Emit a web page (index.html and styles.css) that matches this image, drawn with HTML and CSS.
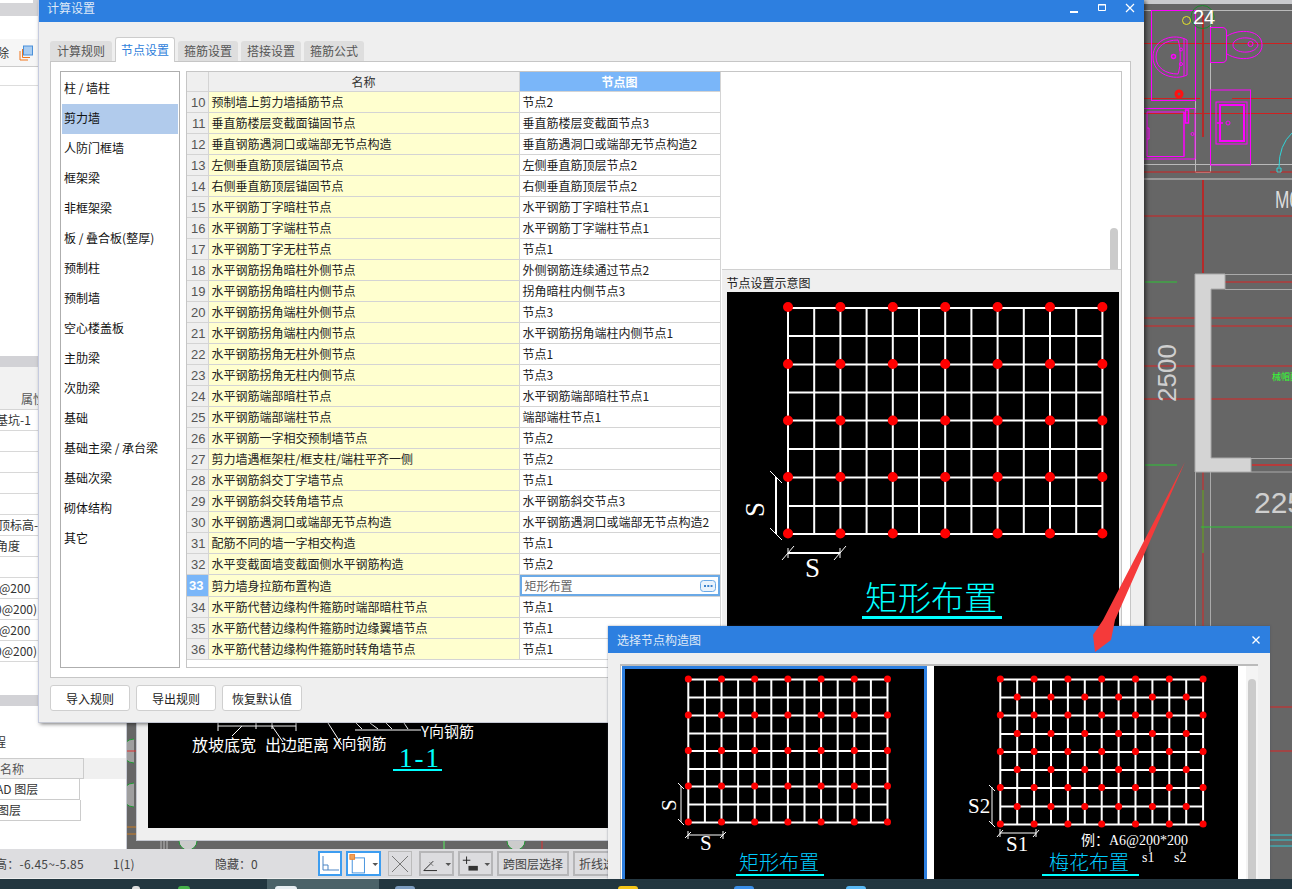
FILE: index.html
```html
<!DOCTYPE html>
<html lang="zh">
<head>
<meta charset="utf-8">
<title>计算设置</title>
<link rel="stylesheet" href="styles.css">
</head>
<body>
<div class="desktop">

  <aside class="side">
    <div class="side-top"><span class="side-tab"></span></div>
    <div class="side-light"></div>
    <div class="side-tools"><span class="tool-text">除</span>
      <svg class="tool-icon" width="16" height="16" viewBox="0 0 16 16"><path d="M2 6V15H10M4.500 4V12.500H12" fill="none" stroke="#f0761e"/><rect x="5.500" y="1" width="9" height="9" fill="#a9cdf2" stroke="#4a90d9"/></svg>
    </div>
    <div class="side-line"></div>
    <div class="side-tree"></div>
    <div class="side-bar"></div>
    <div class="prop-head"><span>属性</span></div>
    <div class="prop-row"><span class="in3">基坑-1</span></div>
    <div class="prop-row"></div>
    <div class="prop-row"></div>
    <div class="prop-row"></div>
    <div class="prop-row"></div>
    <div class="prop-row"><span class="in2">顶标高-</span></div>
    <div class="prop-row"><span class="in3">角度</span></div>
    <div class="prop-row"></div>
    <div class="prop-row"><span class="in1">@200</span></div>
    <div class="prop-row"><span class="in4">0@200)</span></div>
    <div class="prop-row"><span class="in1">@200</span></div>
    <div class="prop-row"><span class="in4">0@200)</span></div>
    <div class="side-gap"></div>
    <div class="side-bar"></div>
    <div class="layer-title"><span class="in6">程</span></div>
    <div class="layer-head"><span class="layer-cell">名称</span></div>
    <div class="layer-row"><span class="layer-cell in5">AD 图层</span></div>
    <div class="layer-row"><span class="layer-cell in7">图层</span></div>
  </aside>

  <svg class="cad-strip" width="10" height="126" viewBox="0 0 10 126">
    <rect width="10" height="126" fill="#666"/>
    <path d="M7 16A12 12 0 0 0 7 40M7 60A12 12 0 0 0 7 84" fill="#d8d8d8" fill-opacity=".5" stroke="#1f9a32"/>
    <path d="M0 28H10" stroke="#d33"/>
    <path d="M0 104H10M0 111H10" stroke="#c77a24"/>
  </svg>

  <svg class="cad" width="148" height="889" viewBox="1144 0 148 889">
    <rect x="1144" y="0" width="148" height="889" fill="#666"/>
    <rect x="1144" y="0" width="148" height="4" fill="#c9cacd"/>
    <g fill="none" stroke="#b9b9b9">
      <path d="M1144 10.500H1292M1144 164.500H1292M1195.500 10V172M1210.500 10V172M1195.500 172.500H1210.500"/>
      <path d="M1144 179H1292" stroke="#999" stroke-width="2"/>
    </g>
    <g fill="none" stroke="#d92424">
      <path d="M1144 43.500H1292M1144 98.500H1200M1232 98.500H1292M1144 113.500H1292M1144 172H1240M1270 172H1292M1144 216H1292" stroke="#d02020"/>
      <path d="M1203 15V137M1203 180V273" stroke="#b52a2a" stroke-width="2"/>
      <path d="M1225 282H1292M1144 318H1195M1211 318H1292M1144 326H1195M1211 326H1292M1144 366H1292M1144 399H1292M1252 465H1292M1203 472V889M1144 707H1292M1144 751H1292"/>
    </g>
    <g fill="none" stroke="#f0f">
      <rect x="1151.500" y="10.500" width="44" height="90"/>
      <path d="M1187 40C1175 33 1153 38 1153 57C1153 75 1175 81 1187 75ZM1178 40C1166 40 1156 46 1156 57C1156 68 1166 74 1178 74C1181 66 1181 48 1178 40ZM1184 38V76"/>
      <circle cx="1173.500" cy="56.500" r="2" stroke-width="1.500"/><circle cx="1181" cy="49.500" r="1.500"/><circle cx="1181" cy="64" r="1.500"/>
      <path d="M1210.500 27.500H1222Q1226.500 27.500 1226.500 32V58Q1226.500 62.500 1222 62.500H1210.500Z"/>
      <path d="M1227 36C1240 28 1262 30 1262 45C1262 60 1240 62 1227 54M1233 45C1233 36 1256 35 1258 45C1256 55 1233 54 1233 45Z"/>
      <circle cx="1250.500" cy="44" r="2.500"/>
      <rect x="1210.500" y="90" width="40" height="75"/>
      <rect x="1216" y="102" width="31" height="42"/>
      <rect x="1220" y="105" width="24" height="36" stroke-width="2"/>
      <circle cx="1228" cy="123" r="2"/><path d="M1217 123H1223M1220 121V125" stroke-width="1.500"/>
      <path d="M1144 108.500H1195V159H1144M1147 112H1184V156.500H1147V112M1184 112V157M1147 128H1149V139H1147"/>
      <rect x="1185.500" y="110" width="3" height="13" stroke-width="1.500"/>
      <circle cx="1192.500" cy="134" r="1.500"/>
    </g>
    <circle cx="1202.500" cy="17" r="11.500" fill="none" stroke="#198a2a"/>
    <circle cx="1186.500" cy="20.500" r="4" fill="none" stroke="#e5e52a"/>
    <circle cx="1179" cy="94" r="3" fill="none" stroke="#f11" stroke-width="3"/>
    <path d="M1292 133Q1279 145 1279 167M1277 168H1281V172H1277Z" fill="none" stroke="#2fd6da"/>
    <text class="cad-num" x="1193" y="24">24</text>
    <text class="cad-m" transform="translate(1275 208) scale(.72 1)">M0</text>
    <path d="M1195 274H1225V289H1211V458H1251V472H1195Z" fill="#d4d4d4" stroke="#aaa"/>
    <path d="M1225 274.500H1292M1225 289.500H1292M1251 458.500H1292M1251 472H1292M1195.500 472V889M1210.500 472V889" fill="none" stroke="#aaa"/>
    <path d="M1145 282H1177M1145 465H1177M1201 527H1292M1203 490V553" stroke="#2dc635" fill="none"/>
    <path d="M1252 465H1292" stroke="#c33"/>
    <text class="cad-dim" transform="translate(1176 402) rotate(-90)">2500</text>
    <text class="cad-dim225" x="1254" y="513">225</text>
    <text class="cad-green" x="1272" y="380">械帽配</text>
    <path d="M1270 835H1292M1270 840H1292M1270 846H1292" stroke="#31c9d3"/>
  </svg>

  <section class="subwin">
    <svg class="sub-draw" width="460" height="105" viewBox="148 723 460 105">
      <rect x="148" y="723" width="460" height="105" fill="#000"/>
      <path d="M218 723V731M218 726H296M256 723V729M272 723V729M296 723V731M232 736L242 726M283 742L272 726M328 723L342 745M356 723L362 729M370 723L378 729M386 723L392 729M404 723L408 729M355 730H421" fill="none" stroke="#fff"/>
      <text class="cad-white" x="192" y="751">放坡底宽</text>
      <text class="cad-white" x="265" y="751">出边距离</text>
      <text class="cad-white x-label" x="333" y="749">X向钢筋</text>
      <text class="cad-white x-label" x="421" y="737">Y向钢筋</text>
      <text class="sub-cyan" x="399" y="767">1-1</text>
      <rect x="393" y="769" width="49" height="2" fill="#0ff"/>
    </svg>
  </section>

  <svg class="cad-below" width="500" height="8" viewBox="136 841 500 8">
    <path d="M161 841V849M164 841V849M167 841V849M444 841V849" stroke="#bbb"/>
    <path d="M444 841V849" stroke="#2dc635"/>
    <path d="M542 841V849" stroke="#d33"/>
    <path d="M179 841A9 9 0 0 0 197 841M507 841A9 9 0 0 0 525 841" fill="#ccc" stroke="#1f9a32"/>
  </svg>

  <footer class="status">
    <span class="st-a">高：-6.45~-5.85</span>
    <span class="st-b">1(1)</span>
    <span class="st-c">隐藏：0</span>
    <button class="st-btn on w24"><svg width="20" height="20" viewBox="0 0 20 20"><path d="M3 2V16H19M3 11H8V16" fill="none" stroke="#4a84c4"/></svg></button>
    <button class="st-btn on w35"><svg width="33" height="22" viewBox="0 0 33 22"><rect x="4.500" y="4.500" width="13" height="16" fill="none" stroke="#3f8fdc"/><rect x="2" y="1" width="5" height="5" fill="#f0a25a" stroke="#e8802c"/><path d="M26 10H32L29 13Z" fill="#555"/></svg></button>
    <button class="st-btn w24 off"><svg width="20" height="20" viewBox="0 0 20 20"><path d="M2 2L18 18M18 2L2 18" stroke="#777"/></svg></button>
    <button class="st-btn w35"><svg width="33" height="22" viewBox="0 0 33 22"><path d="M3 18H17M3 18L13 8" stroke="#222" fill="none"/><path d="M9 9L13 13" stroke="#777"/><path d="M26 10H32L29 13Z" fill="#555"/></svg></button>
    <button class="st-btn w35"><svg width="33" height="22" viewBox="0 0 33 22"><path d="M3 7H11M7 3V11" stroke="#222"/><rect x="9" y="13" width="10" height="5" fill="#333"/><path d="M26 10H32L29 13Z" fill="#555"/></svg></button>
    <button class="st-btn w72">跨图层选择</button>
    <button class="st-btn w60">折线选择</button>
  </footer>

  <div class="taskbar">
    <span class="task-dot t1"></span>
    <span class="task-dot t2"></span>
    <span class="task-active"><span class="task-dot t3"></span></span>
    <span class="task-dot t4"></span>
    <span class="task-dot t5"></span>
    <span class="task-dot t6"></span>
    <span class="task-dot t7"></span>
  </div>

  <section class="win main-win">
    <header class="win-title">
      <span class="win-name">计算设置</span>
      <span class="win-btns">
        <svg width="10" height="10" viewBox="0 0 10 10"><rect x="1" y="8" width="8" height="2" fill="#fff"/></svg>
        <svg width="10" height="10" viewBox="0 0 10 10"><path d="M1.500 1.500H8.500V7.500H1.500Z M1 2H9" fill="none" stroke="#fff"/></svg>
        <svg width="10" height="10" viewBox="0 0 10 10"><path d="M1 1L9 9M9 1L1 9" stroke="#fff" stroke-width="1.200"/></svg>
      </span>
    </header>
    <nav class="tabs">
      <span class="tab">计算规则</span>
      <span class="tab active">节点设置</span>
      <span class="tab">箍筋设置</span>
      <span class="tab">搭接设置</span>
      <span class="tab">箍筋公式</span>
    </nav>
    <div class="pane">
      <ul class="list">
        <li>柱 / 墙柱</li>
        <li class="sel">剪力墙</li>
        <li>人防门框墙</li>
        <li>框架梁</li>
        <li>非框架梁</li>
        <li>板 / 叠合板(整厚)</li>
        <li>预制柱</li>
        <li>预制墙</li>
        <li>空心楼盖板</li>
        <li>主肋梁</li>
        <li>次肋梁</li>
        <li>基础</li>
        <li>基础主梁 / 承台梁</li>
        <li>基础次梁</li>
        <li>砌体结构</li>
        <li>其它</li>
      </ul>
      <div class="grid-box">
        <table class="grid">
          <colgroup><col class="c-num"><col class="c-name"><col class="c-node"></colgroup>
          <thead><tr><th></th><th>名称</th><th class="th-on">节点图</th></tr></thead>
          <tbody>
            <tr><td>10</td><td>预制墙上剪力墙插筋节点</td><td>节点2</td></tr>
            <tr><td>11</td><td>垂直筋楼层变截面锚固节点</td><td>垂直筋楼层变截面节点3</td></tr>
            <tr><td>12</td><td>垂直钢筋遇洞口或端部无节点构造</td><td>垂直筋遇洞口或端部无节点构造2</td></tr>
            <tr><td>13</td><td>左侧垂直筋顶层锚固节点</td><td>左侧垂直筋顶层节点2</td></tr>
            <tr><td>14</td><td>右侧垂直筋顶层锚固节点</td><td>右侧垂直筋顶层节点2</td></tr>
            <tr><td>15</td><td>水平钢筋丁字暗柱节点</td><td>水平钢筋丁字暗柱节点1</td></tr>
            <tr><td>16</td><td>水平钢筋丁字端柱节点</td><td>水平钢筋丁字端柱节点1</td></tr>
            <tr><td>17</td><td>水平钢筋丁字无柱节点</td><td>节点1</td></tr>
            <tr><td>18</td><td>水平钢筋拐角暗柱外侧节点</td><td>外侧钢筋连续通过节点2</td></tr>
            <tr><td>19</td><td>水平钢筋拐角暗柱内侧节点</td><td>拐角暗柱内侧节点3</td></tr>
            <tr><td>20</td><td>水平钢筋拐角端柱外侧节点</td><td>节点3</td></tr>
            <tr><td>21</td><td>水平钢筋拐角端柱内侧节点</td><td>水平钢筋拐角端柱内侧节点1</td></tr>
            <tr><td>22</td><td>水平钢筋拐角无柱外侧节点</td><td>节点1</td></tr>
            <tr><td>23</td><td>水平钢筋拐角无柱内侧节点</td><td>节点3</td></tr>
            <tr><td>24</td><td>水平钢筋端部暗柱节点</td><td>水平钢筋端部暗柱节点1</td></tr>
            <tr><td>25</td><td>水平钢筋端部端柱节点</td><td>端部端柱节点1</td></tr>
            <tr><td>26</td><td>水平钢筋一字相交预制墙节点</td><td>节点2</td></tr>
            <tr><td>27</td><td>剪力墙遇框架柱/框支柱/端柱平齐一侧</td><td>节点2</td></tr>
            <tr><td>28</td><td>水平钢筋斜交丁字墙节点</td><td>节点1</td></tr>
            <tr><td>29</td><td>水平钢筋斜交转角墙节点</td><td>水平钢筋斜交节点3</td></tr>
            <tr><td>30</td><td>水平钢筋遇洞口或端部无节点构造</td><td>水平钢筋遇洞口或端部无节点构造2</td></tr>
            <tr><td>31</td><td>配筋不同的墙一字相交构造</td><td>节点1</td></tr>
            <tr><td>32</td><td>水平变截面墙变截面侧水平钢筋构造</td><td>节点2</td></tr>
            <tr class="cur"><td>33</td><td>剪力墙身拉筋布置构造</td><td><span class="edit"><span>矩形布置</span><svg class="dots" width="16" height="12" viewBox="0 0 16 12"><rect x=".5" y=".5" width="15" height="11" rx="3" fill="#eaf3fc" stroke="#6aa9e6"/><path d="M4 6H12.500" stroke="#3b82cc" stroke-width="2" stroke-dasharray="2 1.300"/></svg></span></td></tr>
            <tr><td>34</td><td>水平筋代替边缘构件箍筋时端部暗柱节点</td><td>节点1</td></tr>
            <tr><td>35</td><td>水平筋代替边缘构件箍筋时边缘翼墙节点</td><td>节点1</td></tr>
            <tr><td>36</td><td>水平筋代替边缘构件箍筋时转角墙节点</td><td>节点1</td></tr>
          </tbody>
        </table>
        <div class="right-col">
          <div class="blank"><span class="scroll"></span></div>
          <div class="preview">
            <div class="preview-name">节点设置示意图</div>
            <svg class="preview-img" width="392" height="340" viewBox="726 292 392 340">
              <rect x="726" y="292" width="392" height="340" fill="#000"/>
              <path class="wire" d="M787 308V534M813.200 308V534M839.400 308V534M865.600 308V534M891.800 308V534M918 308V534M944.200 308V534M970.400 308V534M996.600 308V534M1022.800 308V534M1049 308V534M1075.200 308V534M1101.400 308V534M787 308H1101.400M787 336H1101.400M787 364.500H1101.400M787 392.500H1101.400M787 420.500H1101.400M787 449H1101.400M787 477.500H1101.400M787 506H1101.400M787 534H1101.400"/>
              <path class="dot-big" d="M787 307H1102M787 364H1102M787 420.500H1102M787 477H1102M787 533.500H1102"/>
              <path d="M775 477V534M769 471L781 483M769 528L781 540M787 553H839M787 548V558M839 548V558M781 560L793 546M833 560L845 546" fill="none" stroke="#fff"/>
              <path d="M775 477V534M787 553H839" stroke="#fff" stroke-width="2" fill="none"/>
              <text class="big-s" transform="translate(763 517) rotate(-90)">S</text>
              <text class="big-s" x="804" y="577">S</text>
              <text class="big-title" x="864" y="610">矩形布置</text>
              <rect x="861" y="616" width="140" height="3" fill="#0ff"/>
            </svg>
          </div>
        </div>
      </div>
    </div>
    <div class="actions">
      <button class="act">导入规则</button>
      <button class="act">导出规则</button>
      <button class="act">恢复默认值</button>
    </div>
  </section>

  <section class="win pick-win">
    <header class="pick-title">
      <span>选择节点构造图</span>
      <svg width="10" height="10" viewBox="0 0 10 10"><path d="M1.500 1.500L8.500 8.500M8.500 1.500L1.500 8.500" stroke="#fff" stroke-width="1.300"/></svg>
    </header>
    <div class="pick-body">
      <div class="pick-frame">
        <div class="pick-item chosen">
          <svg width="299" height="210" viewBox="625 669 299 210">
            <rect x="625" y="669" width="299" height="210" fill="#000"/>
            <path class="wire" d="M688.300 679V822.500M704.900 679V822.500M721.500 679V822.500M738.100 679V822.500M754.700 679V822.500M771.300 679V822.500M787.900 679V822.500M804.500 679V822.500M821.100 679V822.500M837.700 679V822.500M854.300 679V822.500M870.900 679V822.500M887.500 679V822.500M688 679.500H888M688 697.500H888M688 715.500H888M688 733.500H888M688 751H888M688 769H888M688 786.500H888M688 804.500H888M688 822.500H888"/>
            <path class="dot-a" d="M688.300 679H888M688.300 715H888M688.300 750.500H888M688.300 786H888M688.300 822H888"/>
            <path d="M681 786V822M678 783L684 789M678 819L684 825M688 835H723M688 831V839M723 831V839M685 838L691 832M720 838L726 832" fill="none" stroke="#fff"/>
            <text class="mid-s" transform="translate(676 811) rotate(-90)">S</text>
            <text class="mid-s" x="700" y="850">S</text>
            <text class="mid-title" x="739" y="870">矩形布置</text>
            <rect x="736" y="874" width="88" height="2" fill="#0ff"/>
          </svg>
        </div>
        <div class="pick-item">
          <svg width="304" height="213" viewBox="934 666 304 213">
            <rect x="934" y="666" width="304" height="213" fill="#000"/>
            <path class="wire" d="M1000.300 679V825M1017.200 679V825M1034.100 679V825M1051 679V825M1067.900 679V825M1084.800 679V825M1101.700 679V825M1118.600 679V825M1135.500 679V825M1152.400 679V825M1169.300 679V825M1186.200 679V825M1203.100 679V825M1000 679.500H1203M1000 697.500H1203M1000 715.500H1203M1000 734H1203M1000 752H1203M1000 770H1203M1000 788H1203M1000 806.500H1203M1000 824.500H1203"/>
            <path class="dot-a dot-b" d="M1000.300 679H1204M1000.300 715H1204M1000.300 751.500H1204M1000.300 787.500H1204M1000.300 824H1204"/>
            <path class="dot-a dot-b" d="M1017.200 697H1204M1017.200 733.500H1204M1017.200 769.500H1204M1017.200 806.500H1204"/>
            <path d="M992 787V824M989 785L995 791M989 821L995 827M1000 833H1036M1000 829V837M1036 829V837M997 837L1003 830M1033 837L1039 830M1150 846V852M1182 846V852" fill="none" stroke="#fff"/>
            <text class="mid-s" x="968" y="813">S2</text>
            <text class="mid-s" x="1006" y="851">S1</text>
            <text class="eg" x="1081" y="845">例：A6@200*200</text>
            <text class="eg" x="1142" y="862">s1</text>
            <text class="eg" x="1174" y="862">s2</text>
            <text class="mid-title" x="1049" y="870">梅花布置</text>
            <rect x="1042" y="874" width="97" height="2" fill="#0ff"/>
          </svg>
        </div>
        <div class="pick-scroll"><span></span></div>
      </div>
    </div>
  </section>

  <svg class="arrow" width="100" height="195" viewBox="0 0 100 195"><path d="M95 0L25 158L21 178L5 190L3 173L13 158Z" fill="#f53a3a"/></svg>
</div>
</body>
</html>
```
FILE: styles.css
```css
* { box-sizing: border-box; }
html, body { margin: 0; padding: 0; }
body { font-family: "Noto Sans CJK SC", "Liberation Sans", sans-serif; font-size: 12px; color: #222; }
.desktop { position: relative; width: 1292px; height: 889px; overflow: hidden; background: #666; }

/* left background panel */
.side { position: absolute; left: 0; top: 0; width: 127px; height: 849px; background: #fff; border-right: 1px solid #c9ccd6; display: flex; flex-direction: column; }
.side-top { height: 16px; background: #d5d5d8; }
.side-tab { display: block; width: 33px; height: 3px; background: #fff; }
.side-light { height: 23px; background: #fff; }
.side-tools { height: 28px; background: #f6f6f6; border-bottom: 1px solid #ccc; display: flex; align-items: center; gap: 9px; }
.tool-text { margin-left: -3px; color: #333; }
.side-line { height: 19px; background: #fff; border-bottom: 1px solid #ddd; }
.side-tree { height: 270px; background: #fff; }
.side-bar { height: 11px; background: #d2d2d6; flex: none; }
.prop-head { height: 43px; padding-top: 21px; padding-left: 21px; line-height: 22px; background: #f2f2f2; border-bottom: 1px solid #d5d5d5; color: #555; flex: none; }
.prop-row { height: 21px; border-bottom: 1px solid #d8d8d8; line-height: 20px; white-space: nowrap; color: #333; flex: none; }
.in1 { margin-left: -1px; }
.in2 { margin-left: -2px; }
.in3 { margin-left: -4px; }
.in4 { margin-left: -5px; }
.in5 { margin-left: -4px; }
.in6 { margin-left: -6px; }
.in7 { margin-left: -3px; }
.side-gap { height: 33px; flex: none; }
.layer-title { height: 52px; padding-top: 27px; color: #333; flex: none; }
.layer-head { height: 21px; background: #f0f0f0; line-height: 20px; color: #555; flex: none; }
.layer-row { height: 21px; line-height: 20px; color: #333; flex: none; }
.layer-cell { display: block; width: 84px; height: 21px; border-right: 1px solid #ccc; border-bottom: 1px solid #ccc; }
.layer-head .layer-cell { border-top: 1px solid #ccc; }

/* fragments of the CAD canvas */
.cad-strip { position: absolute; left: 127px; top: 723px; }
.cad-below { position: absolute; left: 136px; top: 841px; }
.cad { position: absolute; left: 1144px; top: 0; }
.cad-num { font: 20px "Liberation Sans", sans-serif; fill: #fff; }
.cad-m { font: 24px "Liberation Sans", sans-serif; fill: #ddd; }
.cad-dim { font: 26px "Liberation Sans", sans-serif; fill: #cfcfcf; }
.cad-dim225 { font: 30px "Liberation Sans", sans-serif; fill: #cfcfcf; }
.cad-green { font: 9px "Noto Sans CJK SC", sans-serif; fill: #3f3; }

.subwin { position: absolute; left: 136px; top: 700px; width: 500px; height: 141px; background: #efefef; border: 1px solid #c3c6ce; border-top: 0; padding: 23px 0 0 11px; }
.sub-draw { display: block; }
.cad-white { font: 16px "Noto Sans CJK SC", sans-serif; fill: #fff; }
.x-label { font-size: 15px; }
.sub-cyan { font: 27px "Liberation Serif", serif; fill: #0ff; letter-spacing: 2px; }

/* status bar */
.status { position: absolute; left: 0; top: 849px; width: 700px; height: 30px; background: #dddde0; border-bottom: 1px solid #eee; display: flex; align-items: center; white-space: nowrap; color: #444; font-size: 12px; }
.st-a { width: 113px; flex: none; text-indent: -5px; letter-spacing: .25px; }
.st-b { width: 102px; flex: none; }
.st-c { width: 103px; flex: none; }
.st-btn { height: 25px; padding: 0; margin: 0 4px 0 0; background: #dcdcdf; border: 2px solid #b6b6b8; font: 12px "Noto Sans CJK SC", sans-serif; color: #444; display: flex; align-items: center; justify-content: center; flex: none; }
.st-btn svg { display: block; }
.st-btn.on { border-color: #3d9df0; background: #fff; }
.w24 { width: 24px; }
.w35 { width: 35px; }
.w72 { width: 72px; }
.w60 { width: 60px; }
.off { margin-left: 3px; margin-right: 7px; border-color: #bbb; border-width: 1px; }

/* taskbar */
.taskbar { position: absolute; left: 0; top: 879px; width: 1292px; height: 10px; background: #22363f; display: flex; align-items: flex-end; }
.task-active { width: 112px; height: 10px; background: #4b6268; margin-left: 77px; display: flex; align-items: flex-end; flex: none; }
.task-dot { display: block; flex: none; height: 3px; width: 8px; border-radius: 4px 4px 0 0; background: #ddd; }
.t1 { margin-left: 132px; }
.t2 { margin-left: 38px; background: #46b04a; width: 12px; }
.t3 { margin-left: 8px; width: 22px; background: #e8eef2; }
.t4 { margin-left: 16px; width: 20px; background: #7c9cc0; }
.t5 { margin-left: 203px; width: 20px; background: #f5c518; }
.t6 { margin-left: 96px; width: 20px; background: #3a8ee8; }
.t7 { margin-left: 92px; width: 20px; background: #59b9f5; }

/* windows */
.win { position: absolute; }
.main-win { left: 38px; top: 0; width: 1106px; height: 723px; background: #efefef; border-left: 1px solid #c5cbe0; border-bottom: 1px solid #c5c8d2; box-shadow: 2px 1px 4px rgba(0,0,0,.55); display: flex; flex-direction: column; }
.win-title { height: 22px; background: #2d7fe0; color: #dfe9f7; display: flex; justify-content: space-between; padding: 0 9px 0 8px; flex: none; }
.win-name { line-height: 16px; }
.win-btns { display: flex; gap: 18px; padding-top: 3px; }
.tabs { display: flex; gap: 3px; height: 25px; margin: 15px 0 0 11px; align-items: flex-end; position: relative; z-index: 1; flex: none; }
.tab { width: 60px; height: 20px; margin-bottom: 1px; background: #dedede; border-radius: 3px 3px 0 0; text-align: center; line-height: 20px; color: #555; }
.tab:first-child { width: 62px; }
.tab.active { height: 25px; margin-bottom: 0; background: #fff; color: #2f7fdb; border: 1px solid #ccc; border-bottom: 0; line-height: 24px; }
.pane { margin: -1px 12px 0 11px; width: 1081px; height: 617px; background: #fff; border: 1px solid #c6c6c6; padding: 9px; display: flex; gap: 6px; flex: none; }
.list { margin: 0; padding: 2px 1px; list-style: none; width: 120px; height: 597px; border: 1px solid #aeaeae; background: #fff; flex: none; }
.list li { height: 30px; line-height: 28px; padding-left: 2px; color: #111; }
.list li.sel { background: #b1cbec; }
.grid-box { width: 936px; height: 597px; display: flex; border: 1px solid #c6c6c6; background: #fff; }
.grid { border-collapse: collapse; table-layout: fixed; width: 533px; flex: none; align-self: flex-start; }
.c-num { width: 21px; }
.c-name { width: 311px; }
.c-node { width: 201px; }
.grid th { height: 19px; background: #efefef; border: 1px solid #d4d4d4; border-top: 0; border-left: 0; font-weight: 400; color: #333; padding: 0; line-height: 19px; }
.grid th.th-on { background: #7ab6f9; color: #fff; font-weight: 700; }
.grid td { height: 21px; border: 1px solid #d4d4d4; padding: 0 3px; line-height: 20px; white-space: nowrap; overflow: hidden; color: #222; }
.grid td:first-child { background: #efefef; color: #555; text-align: right; padding: 0 2px 0 0; border-left: 0; font: 13px "Liberation Sans", sans-serif; }
.grid td:nth-child(2) { background: #ffffcf; }
.grid tr.cur td:first-child { background: #7ab6f9; color: #fff; font-weight: 700; text-align: center; }
.grid tr.cur td:last-child { padding: 0; }
.edit { display: flex; align-items: center; justify-content: space-between; height: 21px; border: 2px solid #6aa9e6; padding: 0 2px 0 3px; color: #666; }
.dots { display: block; flex: none; }
.right-col { flex: 1; min-width: 0; display: flex; flex-direction: column; }
.blank { height: 197px; display: flex; justify-content: flex-end; align-items: flex-end; flex: none; }
.scroll { width: 8px; height: 41px; margin-right: 3px; background: #cbcbcb; border-radius: 4px 4px 0 0; }
.preview { flex: 1; min-height: 0; background: #efefef; border-top: 1px solid #d0d0d0; padding: 0 3px 0 5px; overflow: hidden; margin-left: 1px; }
.preview-name { height: 22px; line-height: 25px; color: #222; }
.preview-img { display: block; }
.wire { fill: none; stroke: #fff; stroke-width: 2; }
.dot-big { fill: none; stroke: #f00; stroke-width: 10; stroke-linecap: round; stroke-dasharray: 0 52.4; }
.big-s { font: 27px "Liberation Serif", serif; fill: #fff; }
.big-title { font: 300 33px "Noto Sans CJK SC", sans-serif; fill: #0ff; }
.actions { display: flex; gap: 6px; padding: 7px 0 0 11px; }
.act { height: 26px; width: 80px; padding: 0; background: #fff; border: 1px solid #cfcfcf; border-radius: 3px; font: 12px "Noto Sans CJK SC", sans-serif; color: #222; }

.pick-win { left: 608px; top: 626px; width: 662px; height: 253px; background: #efefef; box-shadow: 0 0 2px rgba(60,70,90,.5); overflow: hidden; }
.pick-title { height: 27px; background: #2d7fe0; color: #dfe9f7; display: flex; justify-content: space-between; align-items: center; padding: 0 9px; }
.pick-body { padding: 11px 12px 0 12px; }
.pick-frame { height: 240px; background: #fff; border-top: 2px solid #bbb; border-left: 1px solid #bbb; display: flex; align-items: flex-start; gap: 7px; }
.pick-item { flex: none; background: #000; }
.pick-item svg { display: block; }
.pick-item.chosen { border: 3px solid #2d7fe0; border-bottom: 0; margin-left: 1px; }
.pick-scroll { width: 19px; height: 213px; background: #f4f4f4; display: flex; justify-content: center; padding-top: 13px; margin-left: 1px; }
.pick-scroll span { display: block; width: 8px; height: 200px; background: #cbcbcb; border-radius: 4px 4px 0 0; }
.dot-a { fill: none; stroke: #f00; stroke-width: 7; stroke-linecap: round; stroke-dasharray: 0 33.2; }
.dot-b { stroke-dasharray: 0 33.8; }
.mid-s { font: 21px "Liberation Serif", serif; fill: #fff; }
.mid-title { font: 300 20px "Noto Sans CJK SC", sans-serif; fill: #0cf; }
.eg { font: 14px "Liberation Serif", "Noto Sans CJK SC", serif; fill: #fff; }

.arrow { position: absolute; left: 1090px; top: 462px; }
```
